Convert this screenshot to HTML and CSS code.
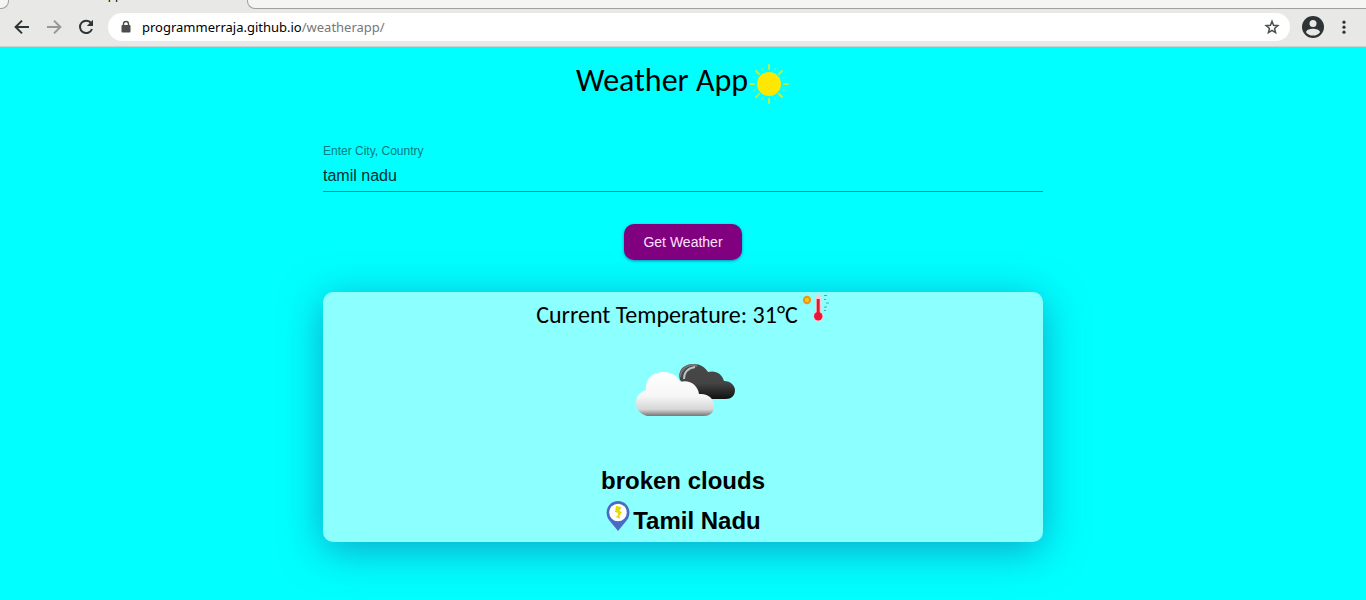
FILE: index.html
```html
<!DOCTYPE html>
<html lang="en">
<head>
<meta charset="utf-8">
<title>Weather App</title>
<link rel="stylesheet" href="styles.css">
</head>
<body>
<header class="browser">
  <div class="tabs">
    <div class="tab-edge"></div>
    <div class="tab-active"><span class="tab-title">Weather App</span></div>
    <div class="tab-rest"></div>
  </div>
  <nav class="toolbar">
    <button class="tool" type="button" aria-label="Back"><svg width="20" height="20" viewBox="0 0 20 20"><path d="M17 10H4M10 3.6L3.6 10L10 16.4" fill="none" stroke="#2e3436" stroke-width="2"/></svg></button>
    <button class="tool" type="button" aria-label="Forward"><svg width="20" height="20" viewBox="0 0 20 20"><path d="M3 10H16M10 3.6L16.4 10L10 16.4" fill="none" stroke="#969896" stroke-width="2"/></svg></button>
    <button class="tool" type="button" aria-label="Reload"><svg width="20" height="20" viewBox="0 0 20 20"><path d="M15.2 6.2A6.2 6.2 0 1 0 16 12" fill="none" stroke="#2e3436" stroke-width="2"/><path d="M17 2.8V9H10.8Z" fill="#2e3436"/></svg></button>
    <div class="address">
      <svg width="12" height="14" viewBox="0 0 12 14"><path d="M3.5 6V4a2.5 2.5 0 0 1 5 0V6" fill="none" stroke="#4a4d4e" stroke-width="1.4"/><rect x="1.5" y="5" width="9" height="7.5" rx="1" fill="#4a4d4e"/></svg>
      <span class="url">programmerraja.github.io<span class="path">/weatherapp/</span></span>
      <button class="tool" type="button" aria-label="Bookmark"><svg width="16" height="16" viewBox="0 0 24 24"><path d="M12 3.500l2.300 6 6.500.5-5 4.200 1.600 6.300L12 17l-5.400 3.500 1.600-6.300-5-4.200 6.500-.5Z" fill="none" stroke="#4a4d4e" stroke-width="2.200"/></svg></button>
    </div>
    <button class="tool" type="button" aria-label="Profile"><svg width="22" height="22" viewBox="1 1 22 22"><circle cx="12" cy="12" r="11" fill="#2e3436"/><circle cx="12" cy="8.600" r="3.500" fill="#e8e8e6"/><path d="M5 17.200C5 14.800 9.500 13.700 12 13.700S19 14.800 19 17.200C17.300 19.400 14.900 20.600 12 20.600S6.700 19.400 5 17.200Z" fill="#e8e8e6"/></svg></button>
    <button class="tool menu" type="button" aria-label="Menu"><svg width="6" height="16" viewBox="0 0 6 16"><g fill="#2e3436"><circle cx="3" cy="3.200" r="1.600"/><circle cx="3" cy="8.200" r="1.600"/><circle cx="3" cy="13.200" r="1.600"/></g></svg></button>
  </nav>
</header>
<main class="app">
  <h1 class="title">Weather App<svg width="42" height="42" viewBox="0 0 42 42"><circle cx="21" cy="21" r="12" fill="#ffe800"/><g stroke="#b8ef45" stroke-width="2" stroke-linecap="round"><path d="M21 2v4M21 36v4M2 21h4M36 21h4M8 8l3 3M31 31l3 3M34 8l-3 3M11 31l-3 3"/></g><g stroke="#7cf59a" stroke-width="1"><path d="M14 5l1 2.500M28 5l-1 2.500M14 37l1-2.500M28 37l-1-2.500M5 14l2.500 1M5 28l2.500-1M37 14l-2.500 1M37 28l-2.500-1"/></g></svg></h1>
  <form class="search">
    <label class="label" for="city">Enter City, Country</label>
    <input class="city" id="city" type="text" value="tamil nadu">
    <button class="submit" type="button">Get Weather</button>
  </form>
  <section class="card">
    <h2 class="temperature">Current Temperature: 31°C<svg width="30" height="32" viewBox="0 0 30 32"><circle cx="7" cy="8" r="4.200" fill="#e99a18"/><circle cx="7" cy="8" r="2" fill="#ffc21c"/><path d="M15.500 5a2.700 2.700 0 0 1 5.400 0V20a5.200 5.200 0 1 1-5.400 0Z" fill="#f4cfd4"/><path d="M16.700 7h3V21h-3Z" fill="#e0182d"/><circle cx="18.200" cy="24.300" r="4.200" fill="#ed1238"/><path d="M24 3.500h3M24 7.500h2M26 11h3M24 15h3M24 18.500h2" stroke="#46a9b4" stroke-width="1"/></svg></h2>
    <svg class="cloud" width="102" height="100" viewBox="0 0 102 100">
      <defs>
        <linearGradient id="dark" x1="0" y1="0" x2="0" y2="1"><stop offset="0" stop-color="#484848"/><stop offset=".55" stop-color="#444"/><stop offset="1" stop-color="#111"/></linearGradient>
        <linearGradient id="light" x1="0" y1="0" x2="0" y2="1"><stop offset="0" stop-color="#fff"/><stop offset=".55" stop-color="#f6f6f6"/><stop offset=".85" stop-color="#d6d6d6"/><stop offset="1" stop-color="#777"/></linearGradient>
      </defs>
      <path d="M46 37C43 25 52 21 60 21C66 21 71 24 74 29C82 27 88 31 90 38C97 38 101 43 101 47C101 53 97 56 92 56H65Z" fill="url(#dark)"/>
      <path d="M46 34C47 25 55 20 63 23" fill="none" stroke="#777" stroke-width="2"/>
      <path d="M50 36C50 28 55 25 61 24" fill="none" stroke="#b8c4c4" stroke-width="2"/>
      <path d="M13 73C6 71 2 66 2 60C2 53 6 49 12 47C11 35 20 29 29 29C37 29 43 32 46 39C55 36 64 42 65 51C74 50 81 56 80 64C80 70 75 73 70 73Z" fill="url(#light)"/>
    </svg>
    <h3 class="condition">broken clouds</h3>
    <p class="place"><svg width="26" height="32" viewBox="0 0 26 32"><path d="M13 31L4 20C-2 11 4 1 13 1S28 11 22 20Z" fill="#496bc5"/><circle cx="13" cy="12.500" r="8.800" fill="#fff"/><path d="M11 6l5.500 1-2 4 2.500 1-2.500 4 .5 2.500-4.500-1.500 2-1 .8-3-3.300-1Z" fill="#e9d900"/></svg>Tamil Nadu</p>
  </section>
</main>
</body>
</html>
```
FILE: styles.css
```css
* { box-sizing: border-box; }
body {
  margin: 0;
  min-height: 100vh;
  background: #00ffff;
  color: #000;
  font-family: "Liberation Sans", Arial, sans-serif;
}
svg { display: block; flex: none; }
button { font: inherit; }
.browser {
  background: #e8e8e6;
  border-bottom: 1px solid #c9d2d0;
}
.tabs {
  display: flex;
  height: 9px;
}
.tab-edge, .tab-rest {
  background: #f5f5f4;
  border: 0 solid #a0a09e;
  border-bottom-width: 1px;
}
.tab-edge {
  width: 9px;
  border-right-width: 1px;
  border-bottom-right-radius: 8px;
}
.tab-rest {
  flex: 1;
  border-left-width: 1px;
  border-bottom-left-radius: 8px;
}
.tab-active {
  display: flex;
  width: 238px;
  align-items: flex-end;
  padding: 0 0 6px 40px;
  overflow: hidden;
}
.tab-title {
  font: 12px/16px "Noto Sans", sans-serif;
}
.toolbar {
  display: flex;
  align-items: center;
  gap: 12px;
  padding: 4px 16px 5px 12px;
}
.tool {
  display: flex;
  padding: 0;
  border: 0;
  background: none;
}
.address {
  display: flex;
  flex: 1;
  align-items: center;
  gap: 10px;
  height: 28px;
  padding: 0 10px 0 12px;
  border-radius: 14px;
  background: #fff;
  font: 13px/20px "Noto Sans", sans-serif;
}
.url { flex: 1; }
.path { color: #777; }
.menu { padding: 0 3px 0 5px; }
.app {
  width: 100%;
  max-width: 720px;
  margin: 0 auto;
  padding-top: 16px;
}
.title {
  display: flex;
  justify-content: center;
  align-items: flex-start;
  margin: 0 0 38px;
  font: 400 32px/36px Carlito, Lato, sans-serif;
}
.search {
  display: flex;
  flex-direction: column;
}
.label {
  color: #008080;
  font-size: 12px;
  line-height: 16px;
}
.city {
  width: 100%;
  height: 33px;
  padding: 2px 0 0;
  border: 0;
  border-bottom: 1px solid #009494;
  outline: 0;
  background: none;
  color: #003030;
  font: 16px/30px "Liberation Sans", Arial, sans-serif;
}
.submit {
  align-self: center;
  height: 36px;
  margin: 32px 0;
  padding: 0 19px;
  border: 0;
  border-radius: 10px;
  background: #800080;
  box-shadow: 0 1px 3px #00408099;
  color: #ffe0ff;
  font-size: 14px;
}
.card {
  display: flex;
  flex-direction: column;
  align-items: center;
  border-radius: 10px;
  background: #8cffff;
  box-shadow: 0 8px 40px #18609c90;
}
.temperature {
  display: flex;
  align-items: center;
  gap: 2px;
  margin: 0;
  font: 400 24px/46px Carlito, Lato, sans-serif;
}
.temperature svg {
  align-self: flex-start;
}
.cloud { margin: 5px 0 19px 4px; }
.condition {
  margin: 0;
  font-size: 24px;
  line-height: 38px;
}
.place {
  display: flex;
  align-items: flex-start;
  gap: 2px;
  margin: 0;
  font-size: 24px;
  font-weight: 700;
  line-height: 42px;
}
```
